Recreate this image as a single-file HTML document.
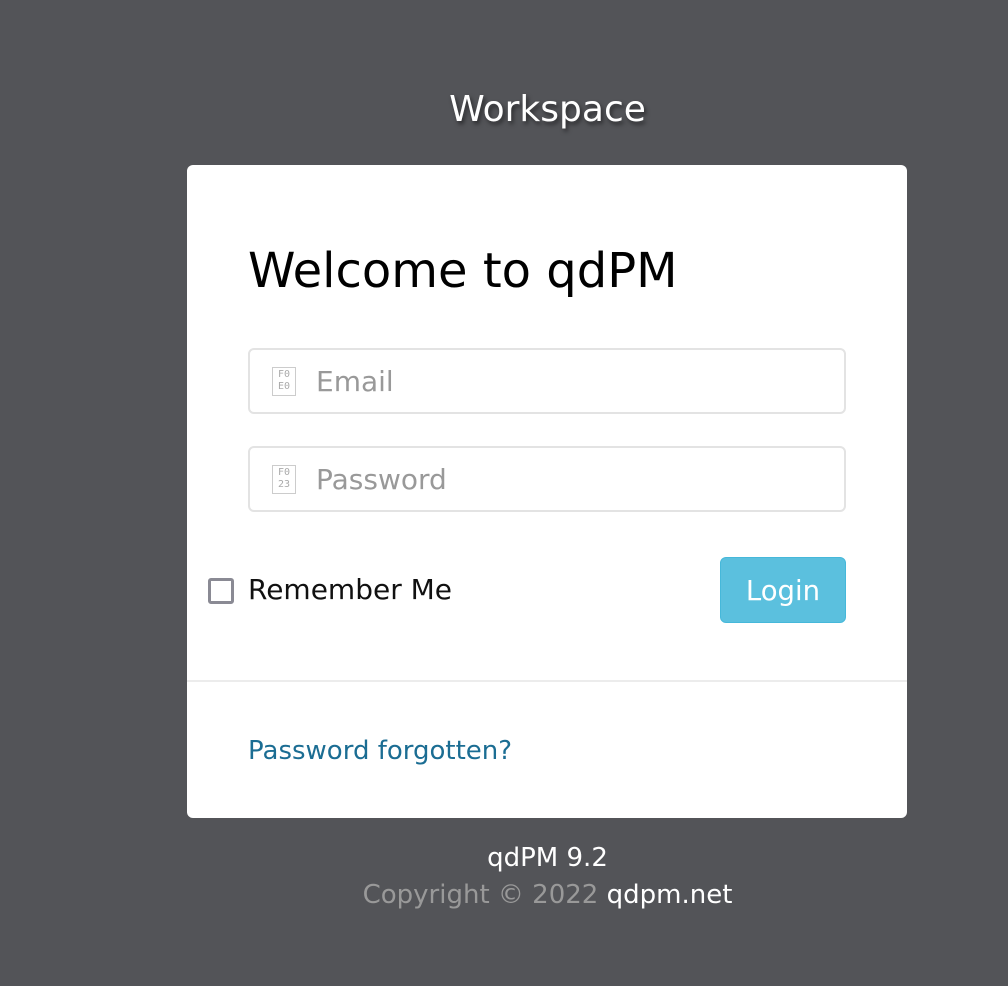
<!DOCTYPE html>
<html><head><meta charset="utf-8"><style>
*{box-sizing:border-box;margin:0;padding:0}
html,body{width:1008px;height:986px;overflow:hidden;background:#535458;font-family:"DejaVu Sans","Liberation Sans",sans-serif}
.ws{position:absolute;left:0;width:1095px;top:89px;text-align:center;color:#fff;font-size:36px;text-shadow:2px 3px 4px rgba(0,0,0,.5)}
.card{position:absolute;left:187px;top:165px;width:720px;height:653px;background:#fff;border-radius:6px}
h1{position:absolute;left:61px;top:78px;font-weight:normal;font-size:48px;color:#000;white-space:nowrap}
.in{position:absolute;left:61px;width:598px;height:66px;border:2px solid #e3e3e3;border-radius:6px}
.in span.ph{position:absolute;left:66px;top:15px;font-size:28px;color:#999}
.tofu{position:absolute;left:22px;top:17px;width:24px;height:29px;border:1px solid #ccc;font-family:"DejaVu Sans Mono",monospace;font-size:10px;line-height:12px;color:#aaa;text-align:center;padding-top:1px}
.cb{position:absolute;left:21px;top:413px;width:26px;height:26px;border:3px solid #8a8a94;border-radius:3px}
.rm{position:absolute;left:61px;top:408px;font-size:28px;color:#111}
.btn{position:absolute;left:533px;top:392px;width:126px;height:66px;background:#5bc0de;border:1px solid #46b8da;border-radius:6px;color:#fff;font-size:27.5px;text-align:center;line-height:66px}
.hr{position:absolute;left:0;right:0;top:515px;border-top:2px solid #ececec}
.lk{position:absolute;left:61px;top:571px;font-size:26px;color:#1b6d93}
.f1{position:absolute;left:0;width:1095px;top:843px;text-align:center;color:#fff;font-size:26px}
.f2{position:absolute;left:0;width:1095px;top:880px;text-align:center;color:#999;font-size:26px}
.f2 b{font-weight:normal;color:#fff}
</style></head><body>
<div class="ws">Workspace</div>
<div class="card">
<h1>Welcome to qdPM</h1>
<div class="in" style="top:183px"><div class="tofu">F0<br>E0</div><span class="ph">Email</span></div>
<div class="in" style="top:281px"><div class="tofu">F0<br>23</div><span class="ph">Password</span></div>
<div class="cb"></div>
<div class="rm">Remember Me</div>
<div class="btn">Login</div>
<div class="hr"></div>
<div class="lk">Password forgotten?</div>
</div>
<div class="f1">qdPM 9.2</div>
<div class="f2">Copyright © 2022 <b>qdpm.net</b></div>
</body></html>
